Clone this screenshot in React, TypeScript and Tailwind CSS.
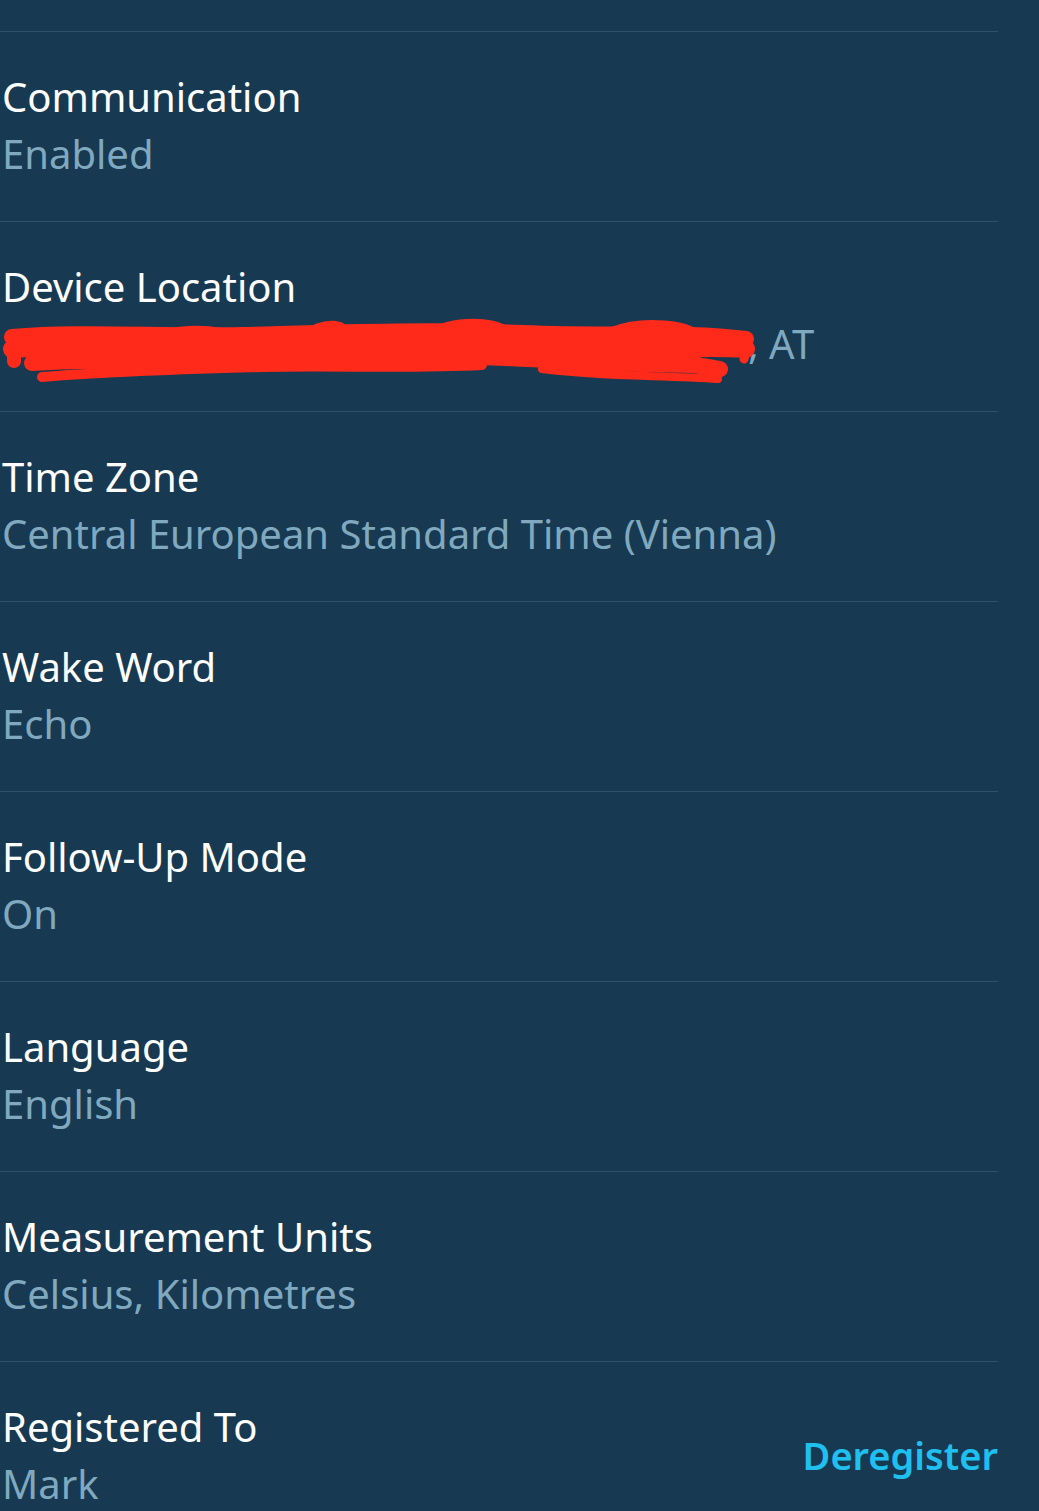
import React from "react";

const rows: { title: string; value: string; redacted?: boolean; action?: string }[] = [
  { title: "Communication", value: "Enabled" },
  { title: "Device Location", value: "AT", redacted: true },
  { title: "Time Zone", value: "Central European Standard Time (Vienna)" },
  { title: "Wake Word", value: "Echo" },
  { title: "Follow-Up Mode", value: "On" },
  { title: "Language", value: "English" },
  { title: "Measurement Units", value: "Celsius, Kilometres" },
  { title: "Registered To", value: "Mark", action: "Deregister" },
];

function Scribble() {
  return (
    <svg
      className="absolute left-0 top-[0px]"
      width="770"
      height="74"
      viewBox="0 0 770 74"
      fill="none"
    >
      <g stroke="#ff2a1a" strokeLinecap="round" strokeLinejoin="round">
        <path d="M10 22 C 80 16, 160 22, 240 20 S 420 14, 520 18 S 680 16, 744 24" strokeWidth="16" />
        <path d="M10 34 C 90 30, 170 36, 260 30 S 430 26, 540 32 S 690 30, 744 34" strokeWidth="18" />
        <path d="M30 48 C 120 42, 200 50, 300 44 S 460 40, 560 46 S 680 46, 718 54" strokeWidth="16" />
        <path d="M40 62 C 110 56, 190 54, 260 52 S 400 54, 480 50" strokeWidth="10" />
        <path d="M300 22 C 320 4, 350 6, 345 26 S 320 52, 350 46" strokeWidth="8" />
        <path d="M440 12 C 470 2, 520 8, 505 30" strokeWidth="7" />
        <path d="M610 16 C 640 4, 690 8, 700 24 S 680 52, 640 48" strokeWidth="8" />
        <path d="M160 18 C 200 10, 250 16, 232 34" strokeWidth="7" />
        <path d="M540 54 C 600 62, 660 60, 716 64" strokeWidth="8" />
        <path d="M12 22 L 12 46" strokeWidth="14" />
        <path d="M700 20 C 730 16, 748 22, 742 44" strokeWidth="9" />
        <path d="M60 40 C 140 30, 230 42, 330 36 S 520 30, 620 38" strokeWidth="12" />
      </g>
    </svg>
  );
}

export default function App() {
  return (
    <div
      className="min-h-[1511px] w-full bg-[#173a52]"
      style={{ fontFamily: '"Noto Sans", "Open Sans", sans-serif' }}
    >
      <div className="w-[998px]">
        <div className="h-[32px] border-b border-[#2e5269]" />
        {rows.map((r, i) => (
          <div
            key={r.title}
            className={`flex items-center justify-between h-[190px] ${i < rows.length - 1 ? "border-b border-[#2e5269]" : ""}`}
          >
            <div className="flex flex-col pl-[2px] pb-[4px]">
              <div className="text-[40px] leading-[57px] text-white">{r.title}</div>
              <div className="text-[40px] leading-[57px] text-[#80a9bf]">
                {r.redacted ? (
                  <span className="flex items-center">
                    <span className="relative inline-block w-[746px] h-[57px]">
                      <Scribble />
                    </span>
                    <span className="whitespace-pre">{", " + r.value}</span>
                  </span>
                ) : (
                  r.value
                )}
              </div>
            </div>
            {r.action && (
              <div className="text-[38px] font-semibold text-[#1fc0ef] pb-[4px]">{r.action}</div>
            )}
          </div>
        ))}
      </div>
    </div>
  );
}
